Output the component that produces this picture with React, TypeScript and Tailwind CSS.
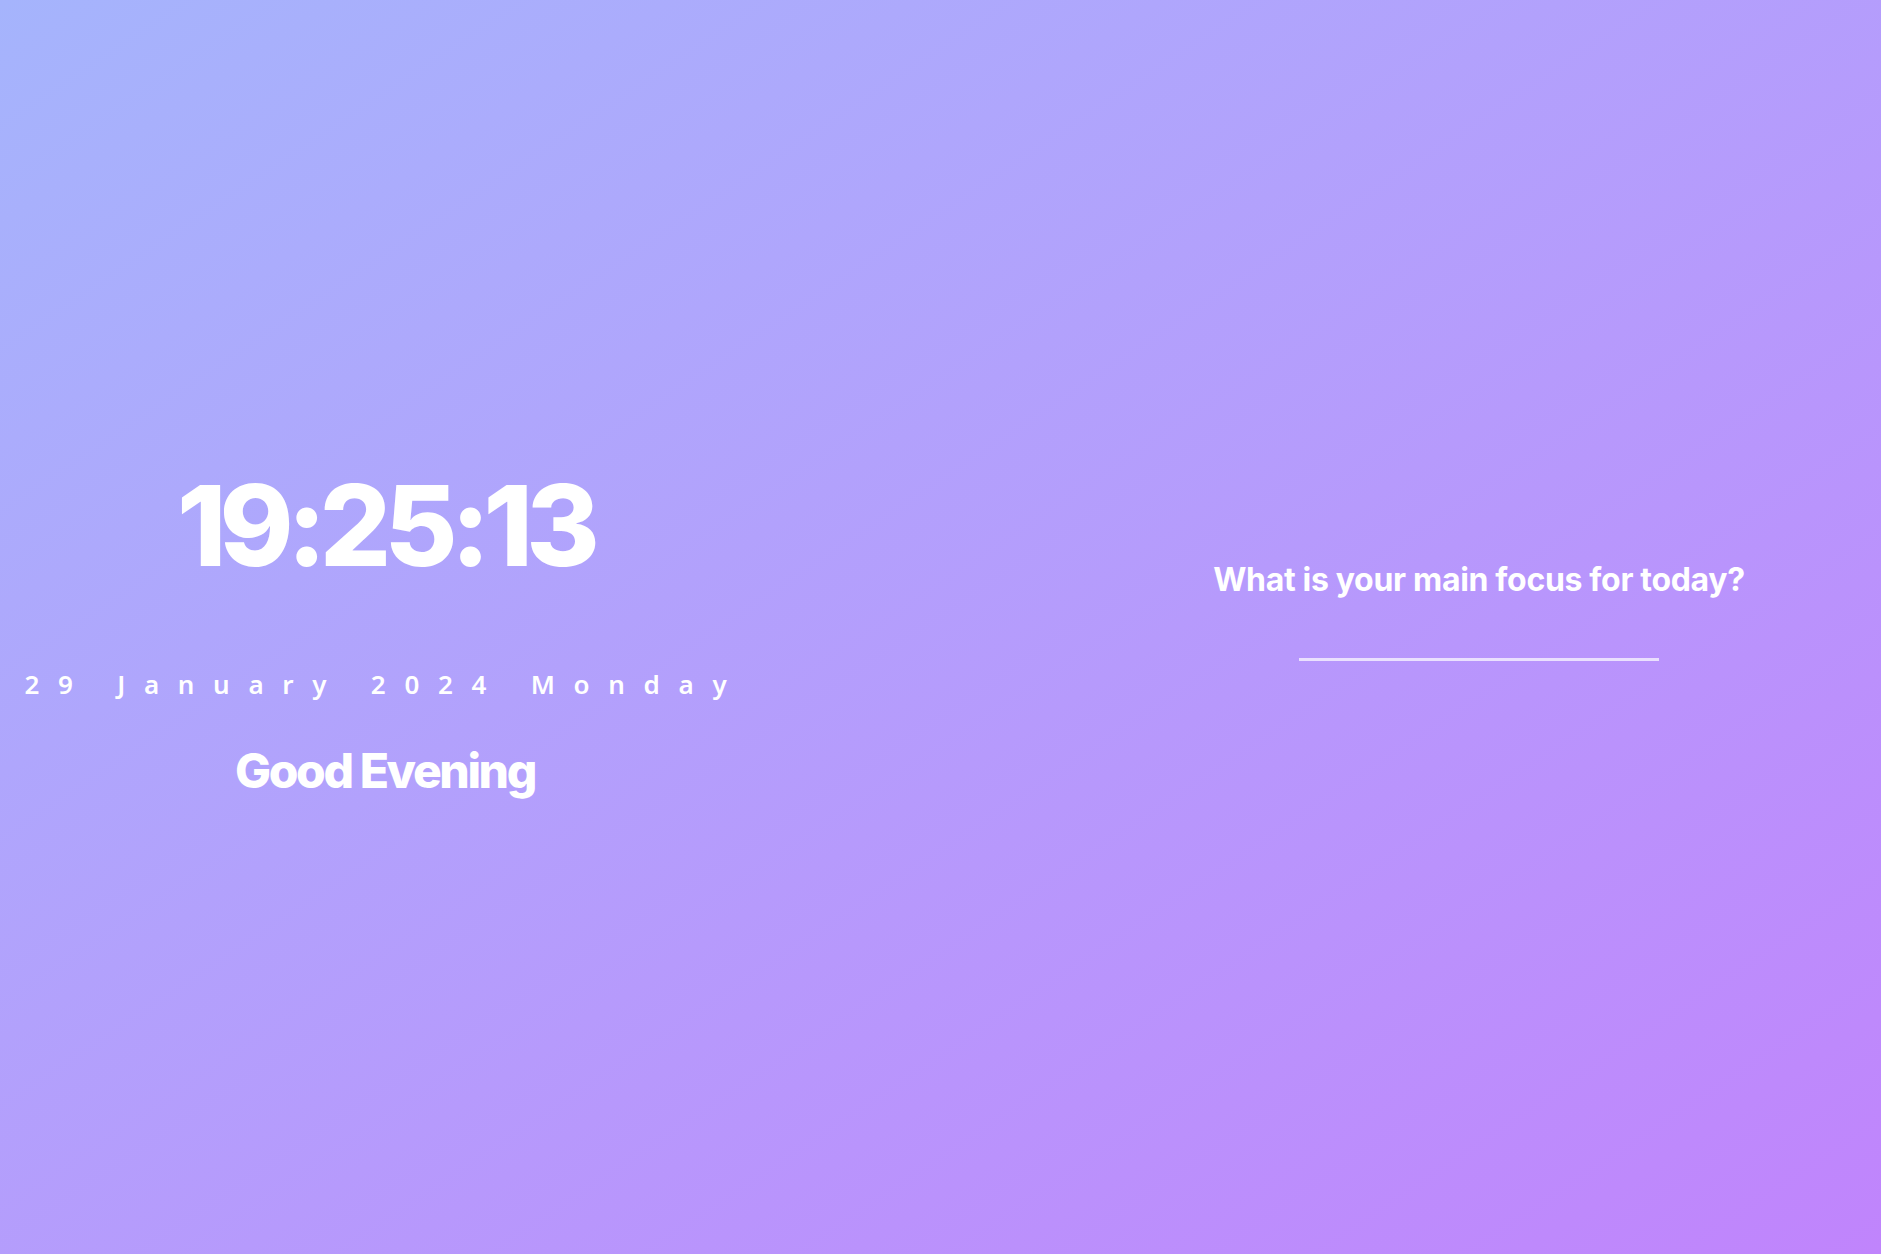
export default function App() {
  return (
    <main className="flex h-screen w-full items-center bg-gradient-to-br from-[#a5b4fc] to-[#c084fc] text-white">
      <section className="flex w-[770px] flex-col items-center pt-[6px]">
        <h1 className="mt-[4px] font-['Inter',sans-serif] text-[112px] font-extrabold leading-none tracking-[-0.06em]">
          19:25:13
        </h1>
        <p className="mt-[90px] font-['Noto_Sans',sans-serif] text-[26px] font-semibold leading-none tracking-[0.72em]">
          29 January 2024 Monday
        </p>
        <h2 className="mt-[50px] font-['Inter',sans-serif] text-[48px] font-extrabold leading-none tracking-[-0.05em]">
          Good Evening
        </h2>
      </section>

      <section className="ml-auto flex w-[804px] flex-col items-center pb-[50px]">
        <label
          htmlFor="focus"
          className="mt-[20px] font-['Inter',sans-serif] text-[32px] font-bold leading-none tracking-[-0.01em]"
        >
          What is your main focus for today?
        </label>
        <input
          id="focus"
          type="text"
          className="mt-[30px] w-[360px] border-b-[3px] border-white/70 bg-transparent text-center text-2xl text-white outline-none"
        />
      </section>
    </main>
  );
}
